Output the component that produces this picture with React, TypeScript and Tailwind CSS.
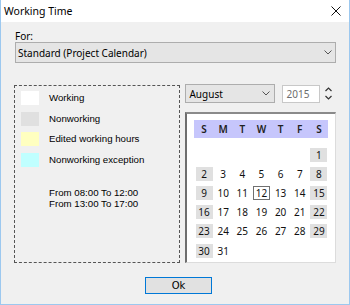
import React from "react";

const days: (number | null)[] = [
  null, null, null, null, null, null, 1,
  2, 3, 4, 5, 6, 7, 8,
  9, 10, 11, 12, 13, 14, 15,
  16, 17, 18, 19, 20, 21, 22,
  23, 24, 25, 26, 27, 28, 29,
  30, 31, null, null, null, null, null,
];

const heads = ["S", "M", "T", "W", "T", "F", "S"];

function Chevron() {
  return (
    <svg width="8" height="5" viewBox="0 0 8 5">
      <path d="M0.5 0.5 L4 4 L7.5 0.5" fill="none" stroke="#555" strokeWidth="1" />
    </svg>
  );
}

export default function App() {
  const legend = [
    { c: "bg-white", t: "Working" },
    { c: "bg-[#e0e0e0]", t: "Nonworking" },
    { c: "bg-[#ffffc0]", t: "Edited working hours" },
    { c: "bg-[#c0ffff]", t: "Nonworking exception" },
  ];
  return (
    <div className="w-[350px] h-[305px] bg-[#f0f0f0] border-x border-b border-[#9cc8ef] flex flex-col overflow-hidden">
      {/* title bar */}
      <div className="h-[22px] bg-white flex items-center justify-between pl-[3px] pr-[8px] shrink-0">
        <span className="text-[10.5px] leading-none text-black" style={{ fontFamily: '"Noto Sans", sans-serif' }}>
          Working Time
        </span>
        <svg width="10" height="10" viewBox="0 0 10 10">
          <path d="M0.5 0.5 L9.5 9.5 M9.5 0.5 L0.5 9.5" stroke="#111" strokeWidth="1" />
        </svg>
      </div>

      <div className="flex flex-col px-[13px]" style={{ fontFamily: '"Noto Sans", sans-serif' }}>
        <div className="mt-[8px] ml-[1px] h-[12px] flex items-center text-[10px] leading-none text-black">For:</div>
        <div className="ml-[1px] h-[21px] bg-[#e5e5e5] border border-[#adadad] flex items-center justify-between pl-[2px] pr-[3px]">
          <span className="text-[10px] leading-none text-black">Standard (Project Calendar)</span>
          <Chevron />
        </div>

        <div className="flex mt-[21px] gap-[5px]">
          {/* legend box */}
          <div
            className="w-[167px] h-[178px] mt-[1px] border border-dashed border-[#555] flex flex-col pl-[6px] pt-[2px]"
            style={{ fontFamily: '"Liberation Sans", Arial, sans-serif' }}
          >
            {legend.map((l) => (
              <div key={l.t} className="flex items-center h-[20.5px]">
                <div className={`w-[18px] h-[14px] ${l.c}`} />
                <span className="ml-[10px] text-[9.7px] leading-none text-black">{l.t}</span>
              </div>
            ))}
            <div className="mt-[17px] ml-[28px] text-[9.7px] leading-[11px] text-black">
              <div>From 08:00 To 12:00</div>
              <div>From 13:00 To 17:00</div>
            </div>
          </div>

          {/* calendar column */}
          <div className="flex flex-col w-[151px]">
            <div className="flex items-center h-[19px]">
              <div className="w-[90px] h-[19px] bg-[#e5e5e5] border border-[#adadad] flex items-center justify-between pl-[3px] pr-[4px]">
                <span className="text-[10px] leading-none text-black">August</span>
                <Chevron />
              </div>
              <div className="ml-[7px] w-[38px] h-[18px] bg-white border border-[#c8c8c8] flex items-center pl-[3px]">
                <span className="text-[10px] leading-none text-[#6d6d6d]">2015</span>
              </div>
              <div className="ml-[5px] flex flex-col items-center gap-[3px]">
                <svg width="7" height="5" viewBox="0 0 7 5">
                  <path d="M0.5 4 L3.5 1 L6.5 4" fill="none" stroke="#333" strokeWidth="1.2" />
                </svg>
                <svg width="7" height="5" viewBox="0 0 7 5">
                  <path d="M0.5 1 L3.5 4 L6.5 1" fill="none" stroke="#333" strokeWidth="1.2" />
                </svg>
              </div>
            </div>

            <div className="mt-[9px] h-[151px] bg-white border-l-2 border-t-2 border-r border-b border-l-[#6e6e6e] border-t-[#8a8a8a] border-r-[#dcdcdc] border-b-[#dcdcdc] pl-[7px] pt-[6px]">
              <div className="w-[134px] h-[18px] bg-[#c6c6fc] grid grid-cols-7 items-center">
                {heads.map((h, i) => (
                  <div key={i} className="text-center text-[10px] leading-none font-semibold text-[#222]">
                    {h}
                  </div>
                ))}
              </div>
              <div className="w-[134px] grid grid-cols-7 mt-[7px]">
                {days.map((d, i) => {
                  const weekend = i % 7 === 0 || i % 7 === 6;
                  return (
                    <div key={i} className="h-[19.2px] flex items-center justify-center">
                      {d !== null && (
                        <div
                          className={`w-[17px] h-[14px] flex items-center justify-center text-[10px] leading-none text-[#111] ${
                            weekend ? "bg-[#e0e0e0]" : ""
                          } ${d === 12 ? "border border-[#707070]" : ""}`}
                        >
                          {d}
                        </div>
                      )}
                    </div>
                  );
                })}
              </div>
            </div>
          </div>
        </div>

        <div className="mt-[14px] ml-[131px] w-[67px] h-[17px] bg-[#e1e1e1] border border-[#0078d7] flex items-center justify-center">
          <span className="text-[10px] leading-none text-black" style={{ fontFamily: '"DejaVu Sans", sans-serif' }}>
            Ok
          </span>
        </div>
      </div>
    </div>
  );
}
